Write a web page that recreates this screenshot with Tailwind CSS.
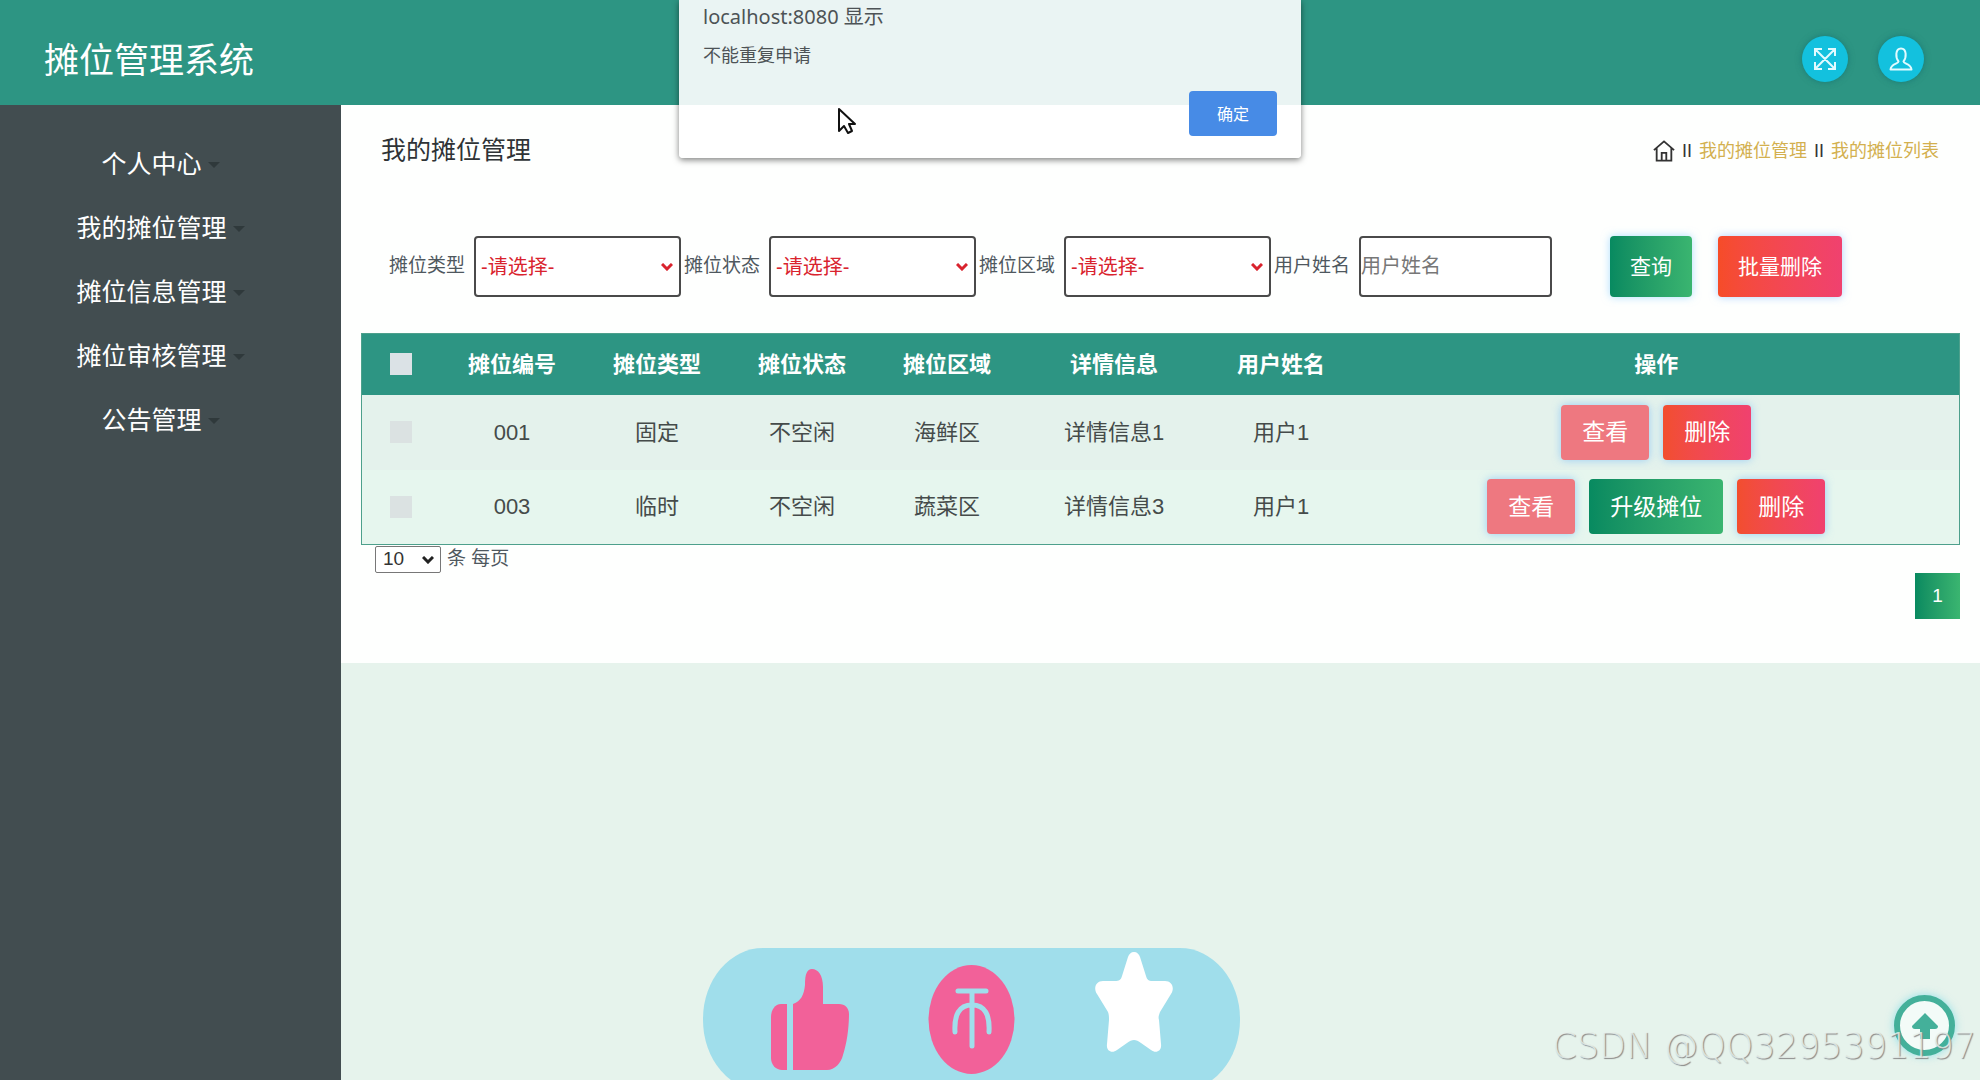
<!DOCTYPE html>
<html lang="zh-CN">
<head>
<meta charset="utf-8">
<meta name="viewport" content="width=device-width, initial-scale=1">
<title>摊位管理系统</title>
<script src="https://cdn.jsdelivr.net/npm/@tailwindcss/browser@4"></script>
</head>
<body class="relative flex h-screen flex-col overflow-hidden bg-[#e6f3ec] font-['Liberation_Sans','Noto_Sans_CJK_SC',sans-serif] text-[#4f585e]">

<header class="flex h-[105px] shrink-0 items-center justify-between bg-[#2d9583] pr-14 pl-11">
  <h1 class="pt-4 text-[35px] leading-[52px] text-white">摊位管理系统</h1>
  <div class="flex gap-[30px] pt-3">
    <button type="button" aria-label="全屏" class="flex size-[46px] items-center justify-center rounded-full bg-[#13c1de] text-[#e2fbff] shadow-[0_0_6px_rgba(20,110,110,0.7)]">
      <svg class="size-6" viewBox="0 0 24 24" fill="none" stroke="currentColor" stroke-width="2"><path d="M3 3l18 18M21 3L3 21M2 9V2h7M15 2h7v7M22 15v7h-7M9 22H2v-7"/></svg>
    </button>
    <button type="button" aria-label="个人中心" class="flex size-[46px] items-center justify-center rounded-full bg-[#13c1de] text-[#e2fbff] shadow-[0_0_6px_rgba(20,110,110,0.7)]">
      <svg class="size-6" viewBox="0 0 24 24" fill="none" stroke="currentColor" stroke-width="2" stroke-linejoin="round"><path d="M9.500 14.500C6.500 11 6 1.500 12 1.500s5.500 9.500 2.500 13c0 2.500 7.500 2 8 8h-21c.5-6 8-5.500 8-8z"/></svg>
    </button>
  </div>
</header>

<div class="flex min-h-0 flex-1">
  <nav class="w-[341px] shrink-0 bg-[#424d50] pt-7 pr-5 text-[25px] text-white">
    <ul>
      <li><a href="#" class="flex h-16 items-center justify-center gap-[6px]">个人中心<svg class="h-[6px] w-3 text-[#2f393b]" viewBox="0 0 12 6" fill="currentColor"><path d="M0 0h12L6 6z"/></svg></a></li>
      <li><a href="#" class="flex h-16 items-center justify-center gap-[6px]">我的摊位管理<svg class="h-[6px] w-3 text-[#2f393b]" viewBox="0 0 12 6" fill="currentColor"><path d="M0 0h12L6 6z"/></svg></a></li>
      <li><a href="#" class="flex h-16 items-center justify-center gap-[6px]">摊位信息管理<svg class="h-[6px] w-3 text-[#2f393b]" viewBox="0 0 12 6" fill="currentColor"><path d="M0 0h12L6 6z"/></svg></a></li>
      <li><a href="#" class="flex h-16 items-center justify-center gap-[6px]">摊位审核管理<svg class="h-[6px] w-3 text-[#2f393b]" viewBox="0 0 12 6" fill="currentColor"><path d="M0 0h12L6 6z"/></svg></a></li>
      <li><a href="#" class="flex h-16 items-center justify-center gap-[6px]">公告管理<svg class="h-[6px] w-3 text-[#2f393b]" viewBox="0 0 12 6" fill="currentColor"><path d="M0 0h12L6 6z"/></svg></a></li>
    </ul>
  </nav>

  <main class="min-w-0 flex-1">
    <section class="bg-[#fefffe] px-5 pb-11">
      <div class="flex h-[91px] items-center justify-between pr-[21px] pl-5">
        <h2 class="text-[25px] text-[#2f3336]">我的摊位管理</h2>
        <div class="flex items-center gap-[7px] text-lg text-[#333]">
          <a href="#" aria-label="首页"><svg class="size-[22px]" viewBox="0 0 24 24" fill="none" stroke="currentColor" stroke-width="2"><path d="M1 11L12 1.500 23 11M4 9v13.500h16V9M9.500 22v-8h5v8"/></svg></a>
          <span>II</span><a href="#" class="text-[#d3b04f]">我的摊位管理</a><span>II</span><a href="#" class="text-[#d3b04f]">我的摊位列表</a>
        </div>
      </div>

      <form class="mt-10 flex items-center gap-[3px] pl-7 text-[19px]">
        <div class="flex items-center gap-[9px]">
          <label for="kind" class="whitespace-nowrap">摊位类型</label>
          <div class="relative">
            <select id="kind" class="h-[61px] w-[207px] appearance-none rounded border-2 border-[#4a4a4a] bg-white pl-[5px] text-xl text-[#d9232e]"><option>-请选择-</option></select>
            <svg class="pointer-events-none absolute top-[27px] right-2 h-2 w-3 text-[#d9232e]" viewBox="0 0 12 8" fill="none" stroke="currentColor" stroke-width="3"><path d="M1 1l5 5 5-5"/></svg>
          </div>
        </div>
        <div class="flex items-center gap-[9px]">
          <label for="state" class="whitespace-nowrap">摊位状态</label>
          <div class="relative">
            <select id="state" class="h-[61px] w-[207px] appearance-none rounded border-2 border-[#4a4a4a] bg-white pl-[5px] text-xl text-[#d9232e]"><option>-请选择-</option></select>
            <svg class="pointer-events-none absolute top-[27px] right-2 h-2 w-3 text-[#d9232e]" viewBox="0 0 12 8" fill="none" stroke="currentColor" stroke-width="3"><path d="M1 1l5 5 5-5"/></svg>
          </div>
        </div>
        <div class="flex items-center gap-[9px]">
          <label for="area" class="whitespace-nowrap">摊位区域</label>
          <div class="relative">
            <select id="area" class="h-[61px] w-[207px] appearance-none rounded border-2 border-[#4a4a4a] bg-white pl-[5px] text-xl text-[#d9232e]"><option>-请选择-</option></select>
            <svg class="pointer-events-none absolute top-[27px] right-2 h-2 w-3 text-[#d9232e]" viewBox="0 0 12 8" fill="none" stroke="currentColor" stroke-width="3"><path d="M1 1l5 5 5-5"/></svg>
          </div>
        </div>
        <div class="flex items-center gap-[9px]">
          <label for="user" class="whitespace-nowrap">用户姓名</label>
          <input id="user" type="text" placeholder="用户姓名" class="h-[61px] w-[193px] rounded border-2 border-[#4a4a4a] bg-white text-xl placeholder:text-[#777]">
        </div>
        <div class="ml-[55px] flex gap-[26px] text-[21px] text-white">
          <button type="button" class="h-[61px] rounded bg-linear-to-r from-[#078a60] to-[#3ab570] px-5 whitespace-nowrap shadow-[0_0_8px_rgba(120,200,255,0.6)]">查询</button>
          <button type="button" class="h-[61px] rounded bg-linear-to-r from-[#f64c28] to-[#f0416f] px-5 whitespace-nowrap shadow-[0_0_8px_rgba(120,180,255,0.6)]">批量删除</button>
        </div>
      </form>

      <table class="mt-9 w-full table-fixed border-collapse border border-[#4da08c] bg-[#e5f4ed] text-center text-[22px] text-[#454b4a]">
        <colgroup><col class="w-[78px]"><col class="w-[145px]"><col class="w-[145px]"><col class="w-[145px]"><col class="w-[145px]"><col class="w-[189px]"><col class="w-[145px]"><col></colgroup>
        <thead class="bg-[#2d9583] text-white">
          <tr class="h-[61px]">
            <th><input type="checkbox" aria-label="全选" class="block mx-auto size-[22px] appearance-none bg-[#dbe2e6]"></th>
            <th>摊位编号</th><th>摊位类型</th><th>摊位状态</th><th>摊位区域</th><th>详情信息</th><th>用户姓名</th><th>操作</th>
          </tr>
        </thead>
        <tbody>
          <tr class="h-[75px] bg-[#e4f2ec]">
            <td><input type="checkbox" aria-label="选择 001" class="block mx-auto size-[22px] appearance-none bg-[#dbe2e2]"></td>
            <td>001</td><td>固定</td><td>不空闲</td><td>海鲜区</td><td>详情信息1</td><td>用户1</td>
            <td>
              <div class="flex justify-center gap-[14px] text-[23px] text-white">
                <button type="button" class="h-[55px] rounded bg-[#ee7880] px-[21px] shadow-[0_0_8px_rgba(100,180,250,0.6)]">查看</button>
                <button type="button" class="h-[55px] rounded bg-linear-to-r from-[#f24e2e] to-[#f0416f] px-[21px] shadow-[0_0_8px_rgba(100,180,250,0.6)]">删除</button>
              </div>
            </td>
          </tr>
          <tr class="h-[75px] bg-[#e6f6ee]">
            <td><input type="checkbox" aria-label="选择 003" class="block mx-auto size-[22px] appearance-none bg-[#dbe2e2]"></td>
            <td>003</td><td>临时</td><td>不空闲</td><td>蔬菜区</td><td>详情信息3</td><td>用户1</td>
            <td>
              <div class="flex justify-center gap-[14px] text-[23px] text-white">
                <button type="button" class="h-[55px] rounded bg-[#ee7880] px-[21px] shadow-[0_0_8px_rgba(100,180,250,0.6)]">查看</button>
                <button type="button" class="h-[55px] rounded bg-linear-to-r from-[#078a60] to-[#3ab570] px-[21px]">升级摊位</button>
                <button type="button" class="h-[55px] rounded bg-linear-to-r from-[#f24e2e] to-[#f0416f] px-[21px] shadow-[0_0_8px_rgba(100,180,250,0.6)]">删除</button>
              </div>
            </td>
          </tr>
        </tbody>
      </table>

      <div class="flex h-7 items-center gap-[6px] pl-[14px] text-[19px]">
        <div class="relative">
          <select id="size" class="block h-[27px] w-[66px] appearance-none rounded-xs border border-[#777] bg-white pl-[7px] leading-6 text-[#333]"><option>10</option></select>
          <svg class="pointer-events-none absolute top-[10px] right-[7px] h-2 w-3 text-[#222]" viewBox="0 0 12 8" fill="none" stroke="currentColor" stroke-width="3"><path d="M1 1l5 5 5-5"/></svg>
        </div>
        <label for="size">条 每页</label>
      </div>
      <div class="flex justify-end">
        <button type="button" class="h-[46px] w-[45px] bg-linear-to-r from-[#078a60] to-[#3ab570] text-[19px] text-white">1</button>
      </div>
    </section>
  </main>
</div>

<div role="dialog" aria-labelledby="alert-title" class="absolute top-0 left-1/2 h-[158px] w-[622px] -translate-x-1/2 rounded-b-sm bg-white/90 px-6 font-['Noto_Sans','Noto_Sans_CJK_SC',sans-serif] text-[#4d5356] shadow-[0_2px_6px_rgba(0,0,0,0.5)]">
  <p id="alert-title" class="pt-[2px] text-xl leading-[30px]">localhost:8080 显示</p>
  <p class="pt-[10px] text-lg leading-[26px]">不能重复申请</p>
  <div class="flex justify-end pt-[23px]">
    <button type="button" class="h-[45px] w-[88px] rounded bg-[#478be6] text-base text-white">确定</button>
  </div>
</div>

<svg class="absolute top-[107px] left-[837px] h-7 w-[19px]" viewBox="0 0 19 28" fill="#fff" stroke="#111" stroke-width="2" stroke-linejoin="round"><path d="M2 2v22l5-5 4 7 4-2-3-7h6z"/></svg>

<svg class="absolute -bottom-[11px] left-[703px] h-[143px] w-[537px]" viewBox="0 0 537 143">
  <rect width="537" height="143" rx="60" ry="71" fill="#a0deeb"/>
  <g fill="#f26199">
    <path d="M84 56h-6c-6 0-10 6-10 13v41c0 7 5 12 11 12h5z"/>
    <path d="M90 56c8-3 11-9 12-19 0-11 2-16 7-16 6 0 11 6 11 18v17h16c6 0 10 4 10 10 0 13-2 29-6 41-2 8-8 15-16 15H90z"/>
    <ellipse cx="268.500" cy="71.500" rx="43" ry="54.500"/>
  </g>
  <g fill="none" stroke="#a0deeb" stroke-width="5" stroke-linecap="round"><path d="M255 43h28M269 43v55M252 84c-1-17 4-27 17-27s18 10 17 27"/></g>
  <path fill="#fff" d="M431 4c3 0 5 2 6 5l6 19c1 4 3 5 6 5h13c7 0 10 7 6 13l-11 18c-1 3-2 5-1 8l2 24c1 7-5 10-10 6l-10-7c-5-4-9-4-14 0l-10 7c-5 4-11 1-10-6l2-24c0-3 0-5-1-8l-11-18c-4-6-1-13 6-13h12c4 0 6-1 7-5l6-19c1-3 3-5 6-5z"/>
</svg>

<button type="button" aria-label="返回顶部" class="absolute right-[25px] bottom-6 flex size-[61px] items-center justify-center rounded-full border-[6px] border-[#44b09a] bg-[#f3fbf8] text-[#44b09a] shadow-[0_0_8px_rgba(90,210,230,0.6)]">
  <svg class="size-7" viewBox="0 0 28 28" fill="currentColor"><path d="M14 1l13 13c0 2-1 3-3 3h-5v10H9V17H4c-2 0-3-1-3-3z"/></svg>
</button>

<p class="pointer-events-none absolute right-1 bottom-3 text-[35px] leading-[44px] font-extralight whitespace-nowrap text-[#eaf3ee]/80 font-['DejaVu_Sans',sans-serif] [text-shadow:1px_1px_1px_#888]">CSDN @QQ3295391197</p>
</body>
</html>
